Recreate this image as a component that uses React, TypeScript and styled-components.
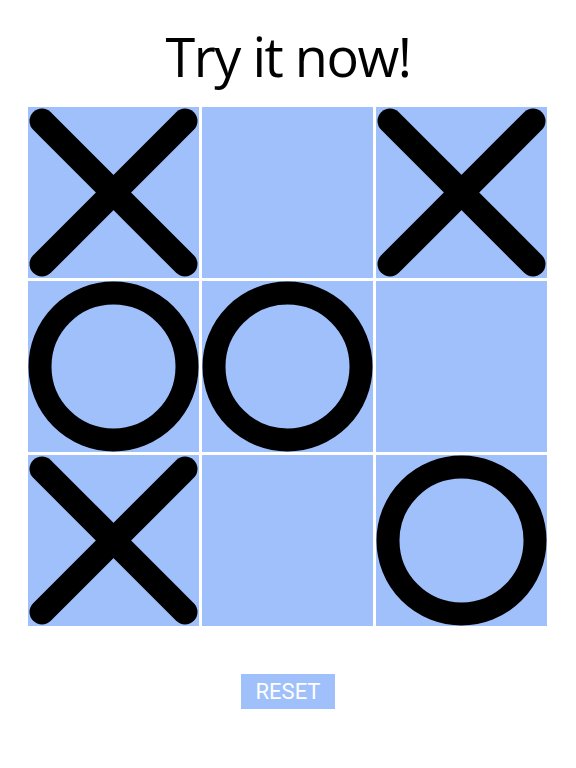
import React, { useState } from 'react';
import styled, { createGlobalStyle } from 'styled-components';

type Mark = 'X' | 'O' | null;

const START: Mark[] = ['X', null, 'X', 'O', 'O', null, 'X', null, 'O'];

const App = () => {
  const [cells, setCells] = useState<Mark[]>(START);
  const [turn, setTurn] = useState<'X' | 'O'>('X');

  const play = (i: number) => {
    if (cells[i]) return;
    const next = cells.slice();
    next[i] = turn;
    setCells(next);
    setTurn(turn === 'X' ? 'O' : 'X');
  };

  const reset = () => {
    setCells(Array(9).fill(null));
    setTurn('X');
  };

  return (
    <Page>
      <GlobalStyle />
      <Title>Try it now!</Title>
      <Board>
        {cells.map((mark, i) => (
          <Cell key={i} onClick={() => play(i)}>
            {mark === 'X' && <CrossMark />}
            {mark === 'O' && <CircleMark />}
          </Cell>
        ))}
      </Board>
      <ResetButton onClick={reset}>RESET</ResetButton>
    </Page>
  );
};

const CrossMark = () => (
  <svg width="171" height="171" viewBox="0 0 171 171">
    <g stroke="#000" strokeWidth="25" strokeLinecap="round">
      <line x1="14" y1="14" x2="157" y2="157" />
      <line x1="157" y1="14" x2="14" y2="157" />
    </g>
  </svg>
);

const CircleMark = () => (
  <svg width="171" height="171" viewBox="0 0 171 171">
    <circle cx="85.5" cy="85.5" r="73.5" fill="none" stroke="#000" strokeWidth="23" />
  </svg>
);

const GlobalStyle = createGlobalStyle`
  html, body {
    margin: 0;
    padding: 0;
    background: #ffffff;
  }
`;

const Page = styled.div`
  width: 576px;
  display: flex;
  flex-direction: column;
  align-items: flex-start;
`;

const Title = styled.h1`
  align-self: stretch;
  margin: 0;
  padding-top: 24px;
  height: 64px;
  line-height: 64px;
  text-align: center;
  font-family: "Open Sans", sans-serif;
  font-weight: 400;
  font-size: 54px;
  letter-spacing: -1.5px;
  color: #000;
`;

const Board = styled.div`
  display: grid;
  grid-template-columns: repeat(3, 171px);
  grid-template-rows: repeat(3, 171px);
  gap: 3px;
  margin: 19px 0 0 28px;
`;

const Cell = styled.div`
  background: #a0c0fc;
  display: flex;
  cursor: pointer;
`;

const ResetButton = styled.button`
  align-self: center;
  margin-top: 48px;
  width: 94px;
  height: 35px;
  border: none;
  padding: 0;
  background: #a0c0fc;
  color: #ffffff;
  font-family: Roboto, sans-serif;
  font-size: 22px;
  cursor: pointer;
`;

export default App;
